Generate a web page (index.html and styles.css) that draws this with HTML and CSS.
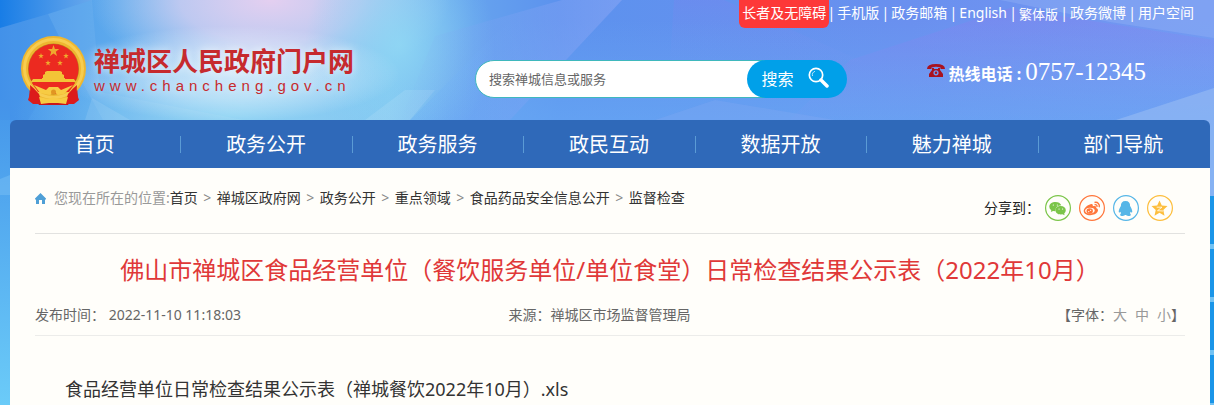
FILE: index.html
```html
<!DOCTYPE html>
<html lang="zh-CN">
<head>
<meta charset="utf-8">
<meta name="viewport" content="width=device-width, initial-scale=1">
<title>禅城区人民政府门户网</title>
<link rel="stylesheet" href="styles.css">
</head>
<body>
<svg class="backdrop" viewBox="0 0 1214 405" preserveAspectRatio="none" aria-hidden="true">
  <defs>
    <linearGradient id="base" x1="0" y1="0" x2="1" y2="0">
      <stop offset="0" stop-color="#4393ea"/><stop offset=".1" stop-color="#5fabed"/>
      <stop offset=".2" stop-color="#8fc3f1"/><stop offset=".32" stop-color="#86c6f1"/>
      <stop offset=".39" stop-color="#66a3ee"/><stop offset=".46" stop-color="#5c92ee"/>
      <stop offset=".75" stop-color="#6a90ef"/><stop offset="1" stop-color="#7498f2"/>
    </linearGradient>
    <linearGradient id="lower" x1="0" y1="0" x2="0" y2="1"><stop offset="0" stop-color="#6aa8f3" stop-opacity="0"/><stop offset="1" stop-color="#66a8f4" stop-opacity=".75"/></linearGradient>
    <radialGradient id="pink"><stop offset="0" stop-color="#e4cff0"/><stop offset=".5" stop-color="#cfcdf1" stop-opacity=".8"/><stop offset="1" stop-color="#b5cdf1" stop-opacity="0"/></radialGradient>
    <radialGradient id="cyan"><stop offset="0" stop-color="#8fd8f4"/><stop offset="1" stop-color="#7fcdf3" stop-opacity="0"/></radialGradient>
    <radialGradient id="glow"><stop offset="0" stop-color="#fff" stop-opacity=".6"/><stop offset=".5" stop-color="#fff" stop-opacity=".4"/><stop offset="1" stop-color="#fff" stop-opacity="0"/></radialGradient>
    <linearGradient id="corner" x1="0" y1="0" x2="1" y2="0"><stop offset="0" stop-color="#187de6"/><stop offset="1" stop-color="#69a8ec"/></linearGradient>
    <linearGradient id="side" x1="0" y1="0" x2="0" y2="1"><stop offset="0" stop-color="#4596ea"/><stop offset="1" stop-color="#6bcbf8"/></linearGradient>
    <linearGradient id="ridge" x1="0" y1="0" x2="1" y2="0"><stop offset="0" stop-color="#7fa0f3" stop-opacity="0"/><stop offset="1" stop-color="#8aa6f5" stop-opacity=".55"/></linearGradient>
    <linearGradient id="violet" x1="0" y1="0" x2="0" y2="1"><stop offset="0" stop-color="#8a7bee" stop-opacity=".35"/><stop offset="1" stop-color="#7f9cf2" stop-opacity=".1"/></linearGradient>
  </defs>
  <path fill="url(#base)" d="M0 0h1214v405H0z"/>
  <path fill="url(#lower)" d="M510 20h704v110H400z"/>
  <path fill="#68a8f3" opacity=".75" d="M1200 130h14v70h-14z"/>
  <path fill="url(#side)" d="M0 100h10v305H0z"/>
  <path fill="#72baf3" d="M0 179l10-4v20H0z" opacity=".6"/>
  <ellipse cx="270" cy="0" rx="180" ry="85" fill="url(#pink)"/>
  <ellipse cx="400" cy="45" rx="95" ry="110" fill="url(#cyan)" opacity=".85"/>
  <ellipse cx="230" cy="115" rx="220" ry="65" fill="url(#cyan)" opacity=".8"/>
  <path fill="url(#corner)" d="M0 0h92L48 14 0 28z"/>
  <path fill="#fff" opacity=".06" d="M92 0L48 14l20 42 35 64h140L100 92z"/>
  <path fill="#3f8ce8" opacity=".2" d="M0 28l48-14 20 40-40 66H0z"/>
  <path fill="#fff" opacity=".1" d="M92 98l38 22H85zM365 120l40-30h30l-25 30z"/>
  <ellipse cx="230" cy="74" rx="170" ry="48" fill="url(#glow)"/>
  <path fill="url(#ridge)" d="M435 36L562 0h60L510 120H400z"/>
  <path fill="url(#violet)" d="M674 0h50l140 62-194-2z" opacity=".6"/>
  <path fill="url(#violet)" d="M850 60L1010 8l204 32v48l-98 32H790z"/>
  <path fill="#8fb0f5" opacity=".45" d="M1000 0h214v38l-104-16z"/>
  <path fill="#a8c4f5" opacity=".45" d="M1116 120l98-32v108h-10v-76z"/>
  <path fill="#8aaaf5" opacity=".25" d="M655 120l60-20 120 20z"/>
  <path fill="#1a95e8" d="M1208 196h6v209h-6z"/>
  <path fill="#72c2f3" d="M1208 244h6v5h-6zm0 53h6v5h-6zm0 53h6v5h-6zm0 53h6v2h-6z"/>
</svg>
<div class="page">
  <header class="header">
    <nav class="toplinks" aria-label="快捷链接">
      <a class="care" href="#">长者及无障碍</a><span class="bar">|</span><a href="#">手机版</a><span class="bar">|</span><a href="#">政务邮箱</a><span class="bar">|</span><a href="#">English</a><span class="bar">|</span><a class="trad" href="#">繁体版</a><span class="bar">|</span><a href="#">政务微博</a><span class="bar">|</span><a href="#">用户空间</a>
    </nav>
    <div class="masthead">
      <a class="brand" href="#">
        <svg class="emblem" viewBox="0 0 66 70" aria-hidden="true">
          <defs><path id="star" d="M0-6 1.4-1.9 5.7-1.9 2.3.7 3.5 4.9 0 2.4-3.5 4.9-2.3.7-5.7-1.9-1.4-1.9z"/></defs>
          <path fill="#c9161b" d="M9 48l-1 17 7-1 3 5h29l3-5 7 1-1-17z"/>
          <circle cx="32.500" cy="32.500" r="32.500" fill="#eeb730"/>
          <circle cx="32.500" cy="32.500" r="29" fill="none" stroke="#f7cd50" stroke-width="3"/>
          <circle cx="32.500" cy="33" r="25.500" fill="#b9851f"/>
          <circle cx="32.500" cy="33" r="25" fill="#ec2a20"/>
          <g fill="#efa92e"><use href="#star" x="32.500" y="15"/>
            <use href="#star" transform="translate(20 20)scale(.5)"/><use href="#star" transform="translate(45 20)scale(.5)"/>
            <use href="#star" transform="translate(27 27)scale(.5)"/><use href="#star" transform="translate(39 27)scale(.5)"/></g>
          <path fill="#f3c437" d="M24 36l2-1h13l2 1v2l2 1v3h1v1h9l2 3H10l2-3h9v-1h1v-3l2-1z"/>
          <path fill="#ec2a20" d="M11 47h43l-6 9H17z"/>
          <path fill="#dc1b1b" d="M9 49q5 4 9 9l3 10H12l-5-4q3-7 2-15zm47 0q-5 4-9 9l-3 10h9l5-4q-3-7-2-15z"/>
          <path fill="#f7cb43" d="M13 49l12 5 3-3h9l3 3 12-5-9 9-6 1-4-3-4 3-5-1-5-1zM18 61l9 2 5-2 6 2 9-2-2 7-8-1H28l-8 1z"/>
          <circle cx="32.500" cy="56" r="2.500" fill="#e19622"/>
        </svg>
        <span class="brandtext"><strong>禅城区人民政府门户网</strong><span class="domain">www.chancheng.gov.cn</span></span>
      </a>
      <form class="search" role="search">
        <input type="search" aria-label="搜索" placeholder="搜索禅城信息或服务">
        <button type="button">搜索<svg viewBox="0 0 21 21" aria-hidden="true"><circle cx="8" cy="8" r="6.700" fill="none" stroke="#fff" stroke-width="1.700"/><path d="M4.500 9A4 4 0 0 1 7 4.300" fill="none" stroke="#b8e5fa" stroke-width="1"/><path d="M13 13l6 6" stroke="#fff" stroke-width="3.500" stroke-linecap="round"/></svg></button>
      </form>
      <div class="hotline">
        <svg viewBox="0 0 18 13" aria-hidden="true"><path fill="#a9121f" fill-rule="evenodd" d="M0 5Q0 0 9 0t9 5H13.500V3.500Q9 2 4.500 3.500V5zM5 4h2v1h4V4h2v2l3 4v3H2v-3l3-4zm4 2.200a2.600 2.600 0 1 0 0 5.200 2.600 2.600 0 0 0 0-5.200zm0 1.400a1.200 1.200 0 1 1 0 2.400 1.200 1.200 0 0 1 0-2.400z"/></svg>
        <b>热线电话 :</b><span class="number">0757-12345</span>
      </div>
    </div>
  </header>
  <nav class="mainnav" aria-label="主导航">
    <a href="#">首页</a><a href="#">政务公开</a><a href="#">政务服务</a><a href="#">政民互动</a><a href="#">数据开放</a><a href="#">魅力禅城</a><a href="#">部门导航</a>
  </nav>
  <main class="content">
    <div class="pathrow">
      <nav class="crumbs" aria-label="当前位置">
        <svg viewBox="0 0 11 11" aria-hidden="true"><path fill="#4f9fd6" d="M5.500 0L11 5.500V6.500H10V11H7V7H4v4H1V6.500H0v-1z"/></svg>
        <span class="here">您现在所在的位置:</span><a href="#">首页</a><i>&gt;</i><a href="#">禅城区政府网</a><i>&gt;</i><a href="#">政务公开</a><i>&gt;</i><a href="#">重点领域</a><i>&gt;</i><a href="#">食品药品安全信息公开</a><i>&gt;</i><a href="#">监督检查</a>
      </nav>
      <div class="share">
        <span>分享到：</span>
        <a class="wechat" href="#" aria-label="微信"><svg viewBox="0 0 26 26"><circle cx="13" cy="13" r="12.400"/><path class="ink" d="M10.500 7C7 7 4.300 9 4.300 11.700q0 2.200 2 3.600L5.800 17l2.300-1.100 2.400.4Q10 10.800 16.300 10.300C15.600 8.200 13.200 7 10.500 7z"/><path class="ink" d="M15.700 11c-3 0-5.200 1.800-5.200 4.200s2.200 4.200 5.200 4.200l1.700-.2 2.200 1.100-.4-1.700q1.600-1.300 1.600-3.300c0-2.500-2.100-4.300-5.100-4.300z"/><path class="mark" d="M8.300 10h.1M12.300 10h.1M14 14h.1M17.500 14h.1"/></svg></a>
        <a class="weibo" href="#" aria-label="微博"><svg viewBox="0 0 26 26"><circle cx="13" cy="13" r="12.400"/><path class="ink" fill-rule="evenodd" d="M11.500 9.200c1.700-.6 2.700.3 2.300 2 2.600-.8 4 .2 3.400 1.900 4 1.400 1.300 7.100-5.900 7.100-4 0-6.600-1.900-6.600-4.300 0-2.600 3.500-5.900 6.800-6.700zm-.5 3.600c-6.800.4-6.200 6 0 5.800 6.700-.3 6-6.100 0-5.800z"/><ellipse class="ink" cx="10.700" cy="16" rx="3.200" ry="2.700"/><path class="mark" d="M9.700 16.600h.1M11.600 15.300h.1"/><path stroke-width="1.400" d="M15.500 7.500c3.200-.8 5.600 1.600 4.700 4.700M15.600 9.700c1.700-.4 2.800.7 2.300 2.200"/></svg></a>
        <a class="qq" href="#" aria-label="QQ"><svg viewBox="0 0 26 26"><circle cx="13" cy="13" r="12.400"/><path class="ink" d="M12.500 6c-3.200 0-4.800 2-4.600 5-1 1.400-2.200 4-2.200 5.500 0 1.300.6 1.500 1.600.2l.8 1.600c-1.400.8-1.200 2.700.6 2.700 1.400 0 2.600-.4 3.300-1h1c.7.600 1.900 1 3.300 1 1.800 0 2-1.900.6-2.700l.8-1.600c1 1.300 1.600 1.100 1.600-.2 0-1.500-1.200-4.100-2.200-5.500.2-3-1.400-5-4.600-5z"/></svg></a>
        <a class="qzone" href="#" aria-label="QQ空间"><svg viewBox="0 0 26 26"><circle cx="13" cy="13" r="12.400"/><path class="ink" d="M12.500 5.500l2.300 5 5.700.6-4.200 3.900 1.200 5.700-5-2.900-5 2.900 1.200-5.700-4.200-3.900 5.700-.6z"/><path stroke="#fffefa" stroke-width=".8" d="M9.700 12.200h5.300l-4.500 3.500 5.500.3"/></svg></a>
      </div>
    </div>
    <h1>佛山市禅城区食品经营单位（餐饮服务单位/单位食堂）日常检查结果公示表（2022年10月）</h1>
    <div class="meta">
      <span>发布时间： <time datetime="2022-11-10T11:18:03">2022-11-10 11:18:03</time></span>
      <div class="metaright"><span>来源：禅城区市场监督管理局</span>
      <span class="sizes">【字体：<button type="button">大</button><button type="button">中</button><button type="button">小</button>】</span></div>
    </div>
    <p class="article"><a href="#">食品经营单位日常检查结果公示表（禅城餐饮2022年10月）.xls</a></p>
  </main>
</div>
</body>
</html>
```
FILE: styles.css
```css
* { box-sizing: border-box; }
html, body { min-height: 100%; }
body {
  margin: 0;
  display: flex;
  min-height: 100vh;
  font: 14px/20px "Noto Sans", "Noto Sans CJK SC", sans-serif;
  color: #333;
  position: relative;
}
a { color: inherit; text-decoration: none; }
button, input { font: inherit; }
.backdrop { position: absolute; inset: 0; width: 100%; height: 100%; z-index: -1; }
.page { flex: 1; display: flex; flex-direction: column; padding: 0 4px 0 10px; min-width: 0; }

.header { color: #fff; height: 120px; }
.toplinks { display: flex; justify-content: flex-end; padding-right: 16px; line-height: 26px; height: 28px; white-space: nowrap; }
.toplinks .care { background: #fd3838; border-radius: 0 0 6px 6px; padding: 0 3px 2px; margin-right: -4px; }
.toplinks .trad { font-size: 13px; line-height: 28px; }
.bar { width: 12px; text-align: center; }

.masthead { display: flex; align-items: flex-start; padding: 0 64px 0 11px; white-space: nowrap; }
.brand { display: flex; align-items: flex-start; gap: 7px; margin: 8px 121px 0 0; color: #c62a2e; }
.emblem { width: 66px; height: 70px; }
.brandtext { display: flex; flex-direction: column; padding-top: 8px; }
.brandtext strong { font: 700 26px/32px "Noto Sans CJK SC", sans-serif; }
.domain { font: 15px/20px "Liberation Sans", sans-serif; letter-spacing: 5px; }
.brandtext strong, .domain { text-shadow: 0 0 8px rgba(255,255,255,.7); }

.search { display: flex; flex: 1; height: 38px; margin-top: 32px; min-width: 0; }
.search input {
  flex: 1; min-width: 0; margin-right: -20px; padding: 0 24px 0 13px;
  border: 1px solid #3fb8bd; border-radius: 19px 0 0 19px; background: #fff; font-size: 13px; outline: 0; appearance: none;
}
.search input::placeholder { color: #666; opacity: 1; }
.search button {
  display: flex; align-items: center; gap: 14px; width: 100px; padding: 0 0 0 15px; z-index: 1;
  border: 0; border-radius: 19px; background: #00a0e9; color: #fff; font-size: 16px;
}
.search svg { width: 21px; height: 21px; margin-bottom: 4px; }

.hotline { display: flex; align-items: baseline; margin: 30px 0 0 80px; font-size: 16px; line-height: 28px; }
.hotline svg { width: 18px; height: 13px; align-self: flex-start; margin: 6px 4px 0 0; }
.number { font: 25px/28px "Liberation Serif", serif; margin-left: 4px; }

.mainnav { display: grid; grid-template-columns: repeat(7, 1fr); background: #2f69b9; border-radius: 6px 6px 0 0; color: #fff; font-size: 20px; line-height: 28px; text-align: center; }
.mainnav a { padding: 11px 2px 9px 0; background: linear-gradient(#5b9bd5, #5b9bd5) right 16px / 1px 17px no-repeat; }
.mainnav a:last-child { background: none; }

.content { flex: 1; background: #fffefa; padding: 0 25px; }
.pathrow { display: flex; justify-content: space-between; height: 66px; border-bottom: 1px solid #e2e2e0; white-space: nowrap; }
.crumbs { display: flex; align-items: center; height: 20px; margin-top: 20px; }
.crumbs svg { width: 11px; height: 11px; margin: 0 8px 0 0; }
.crumbs i { font-style: normal; color: #888; width: 19px; text-align: center; }
.here { color: #999; }
.share { display: flex; align-items: center; gap: 8px; height: 26px; margin: 27px 12px 0 0; color: #222; }
.share span { margin-right: -3px; }
.share a { display: block; height: 26px; }
.share svg { width: 26px; height: 26px; fill: none; stroke: currentColor; stroke-width: 1.2; }
.share .ink { fill: currentColor; stroke: none; }
.share .mark { stroke: #fffefa; stroke-linecap: round; }
.wechat { color: #7bc549; }
.weibo { color: #ff763b; }
.qq { color: #56b6e7; }
.qzone { color: #fdbe3d; }

h1 { margin: 18px 0 0; font-size: 24px; line-height: 36px; font-weight: 400; color: #e03838; text-align: center; }
.meta { display: grid; grid-template-columns: 7fr 10fr; margin-top: 17px; padding-bottom: 10px; border-bottom: 1px solid #ececea; color: #666; }
.metaright { display: flex; justify-content: space-between; }
.sizes { display: flex; }
.sizes button { border: 0; background: none; padding: 0; margin-right: 8px; color: #999; }
.sizes button:last-of-type { margin-right: 0; }
.article { margin: 39px 0 0; padding-left: 30px; font-size: 18px; line-height: 28px; }
```
